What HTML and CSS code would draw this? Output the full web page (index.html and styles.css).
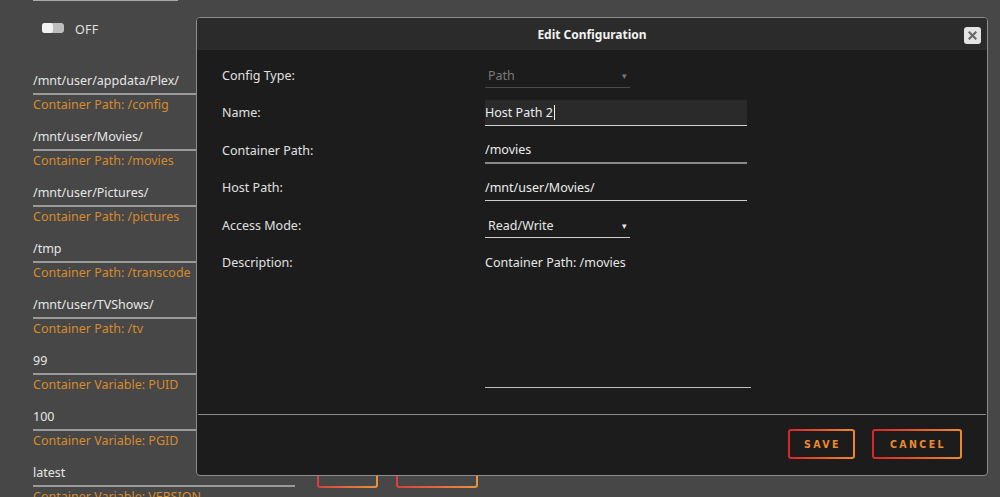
FILE: index.html
```html
<!DOCTYPE html>
<html>
<head>
<meta charset="utf-8">
<link rel="stylesheet" href="styles.css">
</head>
<body>
<div class="page">
  <div class="topline"></div>
  <div class="toggle-row">
    <span class="toggle"><span class="knob"></span></span>
    <span class="toggle-label">OFF</span>
  </div>
  <div class="items">
    <div class="item"><div class="val">/mnt/user/appdata/Plex/</div><div class="desc">Container Path: /config</div></div>
    <div class="item"><div class="val">/mnt/user/Movies/</div><div class="desc">Container Path: /movies</div></div>
    <div class="item"><div class="val">/mnt/user/Pictures/</div><div class="desc">Container Path: /pictures</div></div>
    <div class="item"><div class="val">/tmp</div><div class="desc">Container Path: /transcode</div></div>
    <div class="item"><div class="val">/mnt/user/TVShows/</div><div class="desc">Container Path: /tv</div></div>
    <div class="item"><div class="val">99</div><div class="desc">Container Variable: PUID</div></div>
    <div class="item"><div class="val">100</div><div class="desc">Container Variable: PGID</div></div>
    <div class="item last">
      <div class="val-row">
        <div class="val">latest</div>
        <div class="page-buttons">
          <span class="pbtn pbtn-a"></span>
          <span class="pbtn pbtn-b"></span>
        </div>
      </div>
      <div class="desc">Container Variable: VERSION</div>
    </div>
  </div>
</div>

<div class="dialog">
  <div class="dialog-header">
    <span class="dialog-title">Edit Configuration</span>
    <span class="close">
      <svg width="9" height="9" viewBox="0 0 9 9"><path d="M1.5 1.5 L7.5 7.5 M7.5 1.5 L1.5 7.5" stroke="#6a6a6a" stroke-width="2.2" stroke-linecap="square"/></svg>
    </span>
  </div>
  <div class="dialog-body">
    <div class="form">
      <div class="label">Config Type:</div>
      <div class="field"><div class="select disabled"><span>Path</span><span class="arrow">▾</span></div></div>

      <div class="label">Name:</div>
      <div class="field"><div class="input focused">Host Path 2<span class="caret"></span></div></div>

      <div class="label">Container Path:</div>
      <div class="field"><div class="input thick">/movies</div></div>

      <div class="label">Host Path:</div>
      <div class="field"><div class="input">/mnt/user/Movies/</div></div>

      <div class="label">Access Mode:</div>
      <div class="field"><div class="select"><span>Read/Write</span><span class="arrow">▾</span></div></div>

      <div class="label top">Description:</div>
      <div class="field top"><div class="textarea">Container Path: /movies</div></div>
    </div>
  </div>
  <div class="dialog-sep"></div>
  <div class="dialog-footer">
    <button class="btn btn-save">SAVE</button>
    <button class="btn btn-cancel">CANCEL</button>
  </div>
</div>
</body>
</html>
```

FILE: styles.css
```css
html, body {
  margin: 0;
  padding: 0;
  height: 100%;
  overflow: hidden;
}
body {
  background: #474747;
  font-family: "Noto Sans", "Open Sans", sans-serif;
  font-size: 12.5px;
  color: #e6e6e6;
  position: relative;
}
.page {
  padding-left: 33px;
}
.topline {
  width: 145px;
  height: 1px;
  background: #a8a8a8;
}
.toggle-row {
  display: flex;
  align-items: center;
  gap: 11px;
  margin-top: 21px;
  padding-left: 9px;
  height: 12px;
}
.toggle {
  display: inline-block;
  width: 22px;
  height: 10px;
  border-radius: 3px;
  background: #bdbdbd;
  position: relative;
}
.knob {
  position: absolute;
  left: 0;
  top: 0;
  width: 11px;
  height: 10px;
  border-radius: 3px;
  background: #f2f2f2;
}
.toggle-label {
  font-size: 12.5px;
  color: #e0e0e0;
  letter-spacing: 0.3px;
  position: relative;
  top: 1px;
}
.items {
  margin-top: 36px;
  width: 262px;
}
.item {
  height: 56px;
}
.val {
  height: 23px;
  line-height: 21px;
  border-bottom: 2px solid #9a9a9a;
  color: #e6e6e6;
}
.desc {
  line-height: 20px;
  color: #d58a2c;
}
.val-row {
  display: flex;
  align-items: flex-start;
  width: 500px;
  height: 25px;
}
.val-row .val {
  width: 262px;
  flex: none;
}
.page-buttons {
  display: flex;
  gap: 18px;
  margin: -6px 0 0 22px;
}
.pbtn {
  display: block;
  height: 28px;
  border: 2px solid transparent;
  border-radius: 3px;
  background: linear-gradient(#474747, #474747) padding-box,
              linear-gradient(to right, #d8403a, #e89440) border-box;
}
.pbtn-a { width: 57px; }
.pbtn-b { width: 78px; }

/* dialog overlay */
.dialog {
  position: absolute;
  left: 196px;
  top: 17px;
  width: 790px;
  height: 457px;
  border: 1px solid #8e8e8e;
  border-radius: 4px;
  background: #1c1c1c;
  display: flex;
  flex-direction: column;
  overflow: hidden;
}
.dialog-header {
  height: 32px;
  flex: none;
  background: #2b2b2b;
  display: flex;
  align-items: center;
  justify-content: center;
  position: relative;
}
.dialog-title {
  font-weight: bold;
  font-size: 12px;
  color: #f2f2f2;
}
.close {
  position: absolute;
  right: 6px;
  top: 9px;
  width: 17px;
  height: 17px;
  border-radius: 3px;
  background: #e4e4e4;
  display: flex;
  align-items: center;
  justify-content: center;
}
.dialog-body {
  padding: 7px 0 0 25px;
  flex: 1;
}
.form {
  display: grid;
  grid-template-columns: 263px 266px;
  grid-template-rows: repeat(5, 37.5px) auto;
  align-items: center;
}
.label {
  color: #e0e0e0;
  line-height: 20px;
}
.label.top, .field.top {
  align-self: start;
}
.label.top {
  padding-top: 8px;
}
.select {
  width: 145px;
  height: 25px;
  box-sizing: border-box;
  border-bottom: 1px solid #d0d0d0;
  display: flex;
  align-items: center;
  justify-content: space-between;
  padding: 0 3px 0 3px;
  color: #e6e6e6;
}
.select.disabled {
  color: #7a7a7a;
  border-bottom-color: #4a4a4a;
}
.arrow {
  font-size: 9px;
  color: #e6e6e6;
}
.select.disabled .arrow {
  color: #7a7a7a;
}
.input {
  width: 262px;
  height: 26px;
  box-sizing: border-box;
  border-bottom: 1px solid #cfcfcf;
  line-height: 25px;
  color: #ececec;
  display: flex;
  align-items: center;
}
.input.focused {
  background: #2a2a2a;
}
.input.thick {
  border-bottom: 2px solid #8a8a8a;
  line-height: 24px;
}
.caret {
  display: inline-block;
  width: 1px;
  height: 15px;
  background: #f0f0f0;
  margin-left: 1px;
}
.textarea {
  width: 266px;
  height: 143px;
  box-sizing: border-box;
  padding-top: 8px;
  line-height: 20px;
  border-bottom: 1px solid #bdbdbd;
  color: #e6e6e6;
}
.dialog-sep {
  height: 1px;
  margin: 0 1px;
  background: #8a8a8a;
  flex: none;
  margin-bottom: 14px;
}
.dialog-footer {
  display: flex;
  justify-content: flex-end;
  gap: 17px;
  padding: 0 25px 16px 0;
  flex: none;
}
.btn {
  height: 30px;
  border: 2px solid transparent;
  border-radius: 3px;
  background: linear-gradient(#1c1c1c, #1c1c1c) padding-box,
              linear-gradient(to right, #d9252a, #f08a28) border-box;
  color: #ee8a2e;
  font-family: "DejaVu Sans Condensed", "DejaVu Sans", sans-serif;
  font-stretch: condensed;
  font-weight: bold;
  font-size: 10.5px;
  letter-spacing: 2.4px;
  padding: 0 0 0 2px;
  cursor: pointer;
}
.btn-save { width: 67px; }
.btn-cancel { width: 90px; }
```
